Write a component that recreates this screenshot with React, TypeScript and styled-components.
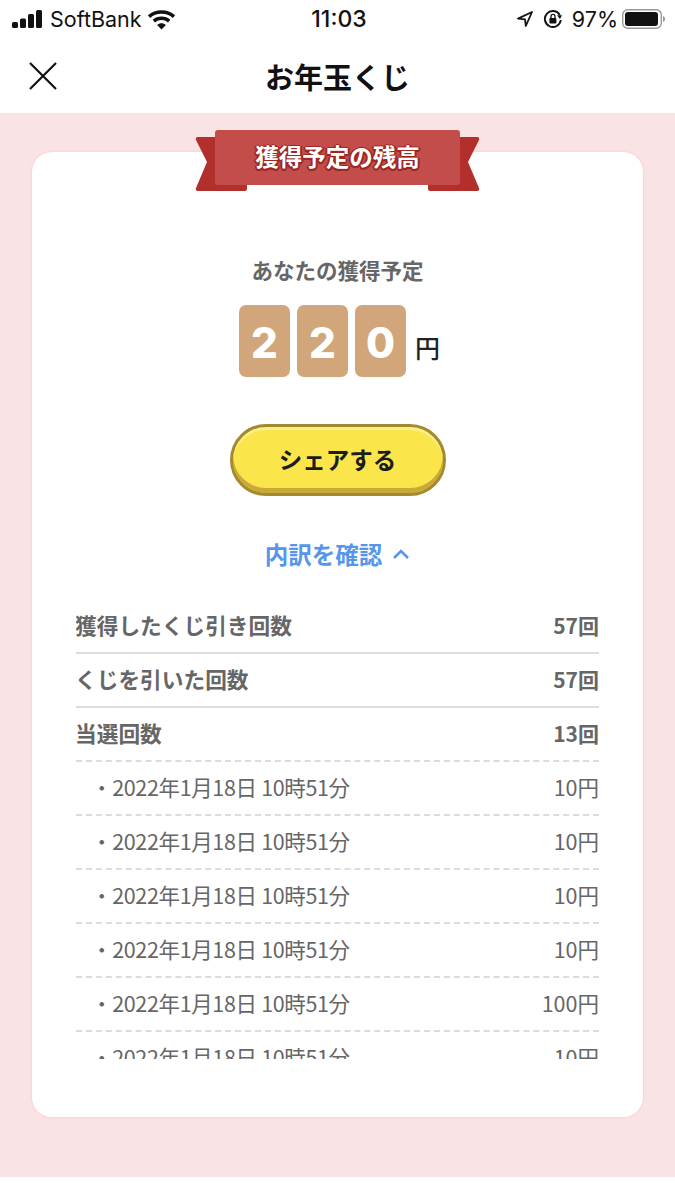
import React from 'react';
import styled, { createGlobalStyle } from 'styled-components';

const FONT = '"Noto Sans CJK JP", "Inter", "Liberation Sans", sans-serif';

const GlobalStyle = createGlobalStyle`
  html, body {
    margin: 0;
    padding: 0;
    background: #fff;
    font-family: ${FONT};
  }
`;

const Page = styled.div`
  width: 675px;
  height: 1200px;
  display: flex;
  flex-direction: column;
  overflow: hidden;
  background: #fff;
`;

const StatusBar = styled.div`
  height: 38px;
  padding: 0 9px 0 12px;
  display: grid;
  grid-template-columns: 1fr auto 1fr;
  align-items: center;
  color: #111;
  font-family: "Inter", "Liberation Sans", sans-serif;
  font-size: 21.5px;
`;

const StatusLeft = styled.div`
  display: flex;
  align-items: center;
  gap: 7px;
`;

const StatusRight = styled.div`
  display: flex;
  align-items: center;
  justify-content: flex-end;
  gap: 9px;
`;

const Clock = styled.div`
  font-weight: 500;
  font-size: 23px;
`;

const Percent = styled.span`
  margin-right: -5px;
`;

const Header = styled.header`
  height: 75px;
  padding: 0 0 0 28px;
  display: flex;
  align-items: center;
  position: relative;
`;

const Title = styled.h1`
  position: absolute;
  left: 0;
  right: 0;
  margin: 0;
  text-align: center;
  font-size: 29px;
  font-weight: 700;
  color: #111;
`;

const Stage = styled.main`
  height: 1064px;
  padding: 39px 32px 0;
  box-sizing: border-box;
  background: #fae3e4;
`;

const Card = styled.section`
  position: relative;
  width: 611px;
  height: 965px;
  box-sizing: border-box;
  background: #fff;
  box-shadow: 0 0 2px 1px #f7d5d6;
  border-radius: 20px;
  padding: 103px 44px 0;
  display: flex;
  flex-direction: column;
  align-items: stretch;
`;

const RibbonTails = styled.svg`
  position: absolute;
  left: 163px;
  top: -15px;
`;

const Ribbon = styled.div`
  position: absolute;
  left: 183px;
  top: -22px;
  width: 245px;
  height: 55px;
  box-sizing: border-box;
  padding-bottom: 3px;
  border-radius: 3px;
  background: #c24d4a;
  color: #fff;
  display: flex;
  align-items: center;
  justify-content: center;
  font-size: 23.5px;
  font-weight: 700;
  text-shadow:
    2px 0 0 #9e2623, -2px 0 0 #9e2623, 0 2px 0 #9e2623, 0 -1px 0 #9e2623,
    1px 2px 0 #9e2623, -1px 2px 0 #9e2623;
`;

const Caption = styled.div`
  text-align: center;
  font-size: 21.5px;
  line-height: 30px;
  font-weight: 700;
  color: #666;
`;

const Amount = styled.div`
  margin-top: 20px;
  display: flex;
  justify-content: center;
  gap: 7px;
  position: relative;
  left: 2px;
`;

const Digit = styled.div`
  width: 51px;
  height: 72px;
  box-sizing: border-box;
  padding-top: 2px;
  border-radius: 7px;
  background: #d2a67b;
  color: #fff;
  display: flex;
  align-items: center;
  justify-content: center;
  font-family: "Inter", "Liberation Sans", sans-serif;
  font-size: 42px;
  font-weight: 800;
`;

const Yen = styled.span`
  align-self: flex-end;
  margin: 0 0 12px 2px;
  font-size: 25px;
  line-height: 36px;
  font-weight: 500;
  color: #222;
`;

const ShareButton = styled.button`
  display: block;
  align-self: center;
  margin-top: 47px;
  width: 216px;
  height: 72px;
  box-sizing: border-box;
  border: 3px solid #a58a2d;
  border-radius: 36px;
  background: #fae64b;
  box-shadow: inset 0 -5px 0 #c9a93a, inset 0 3px 0 #fdf08c;
  font-family: ${FONT};
  font-size: 23.5px;
  font-weight: 700;
  color: #1c1c1c;
  padding: 0 0 3px;
`;

const Toggle = styled.div`
  margin-top: 41px;
  display: flex;
  justify-content: center;
  align-items: center;
  gap: 10px;
  color: #5596ec;
  font-size: 23.5px;
  line-height: 34px;
  font-weight: 700;
`;

const List = styled.div`
  margin-top: 29px;
  height: 459px;
  overflow: hidden;
`;

const Row = styled.div<{ $line: 'solid' | 'dashed' }>`
  height: 54px;
  box-sizing: border-box;
  display: flex;
  align-items: center;
  justify-content: space-between;
  padding-bottom: 3px;
  border-bottom: 2px ${p => p.$line} #dcdcdc;
  color: #666;
`;

const SummaryLabel = styled.span`
  font-size: 21.7px;
  font-weight: 700;
  margin-left: -1px;
`;

const SummaryValue = styled.span`
  font-size: 21px;
  font-weight: 700;
`;

const WinLabel = styled.span`
  padding-left: 15px;
  font-size: 21.5px;
  font-weight: 400;
  letter-spacing: -0.35px;
`;

const WinValue = styled.span`
  font-size: 21.5px;
  font-weight: 400;
`;

const summary = [
  { label: '獲得したくじ引き回数', value: '57回', line: 'solid' as const },
  { label: 'くじを引いた回数', value: '57回', line: 'solid' as const },
  { label: '当選回数', value: '13回', line: 'dashed' as const },
];

const wins = ['10円', '10円', '10円', '10円', '100円', '10円'];

const App = () => (
  <Page>
    <GlobalStyle />
    <StatusBar>
      <StatusLeft>
        <svg width="31" height="20" viewBox="0 0 31 20">
          <rect x="0" y="13" width="6" height="6" rx="1.5" fill="#111" />
          <rect x="8" y="9.5" width="6" height="9.5" rx="1.5" fill="#111" />
          <rect x="16" y="5" width="6" height="14" rx="1.5" fill="#111" />
          <rect x="24" y="1" width="6" height="18" rx="1.5" fill="#111" />
        </svg>
        <span>SoftBank</span>
        <svg width="27" height="21" viewBox="0 0 26 20" style={{ marginLeft: -1 }}>
          <path d="M1 7.2C7.6 1.2 18.4 1.2 25 7.2" fill="none" stroke="#111" strokeWidth="3.4" />
          <path d="M5.6 11.6C9.8 7.9 16.2 7.9 20.4 11.6" fill="none" stroke="#111" strokeWidth="3.4" />
          <path d="M8.8 15.2C11.2 13 14.8 13 17.2 15.2L13 19.6Z" fill="#111" />
        </svg>
      </StatusLeft>
      <Clock>11:03</Clock>
      <StatusRight>
        <svg width="18" height="18" viewBox="0 0 18 18">
          <path d="M16 2L2 8.6L9 9.4L9.8 16Z" fill="none" stroke="#111" strokeWidth="1.8" strokeLinejoin="round" />
        </svg>
        <svg width="20" height="20" viewBox="0 0 20 20">
          <path d="M16.8 6A8 8 0 1 0 17.8 11" fill="none" stroke="#111" strokeWidth="1.9" />
          <path d="M14 6.2L19 6.2L17 10Z" fill="#111" />
          <rect x="6.4" y="9" width="7" height="5.6" rx="1" fill="#111" />
          <path d="M8 9V7.4A2 2 0 0 1 12 7.4V9" fill="none" stroke="#111" strokeWidth="1.3" />
        </svg>
        <Percent>97%</Percent>
        <svg width="44" height="20" viewBox="0 0 44 20">
          <rect x="0.7" y="0.7" width="38.6" height="18.6" rx="5" fill="none" stroke="#999" strokeWidth="1.4" />
          <rect x="3" y="3" width="33" height="14" rx="3" fill="#111" />
          <path d="M41 7C42.5 7.5 43 8.5 43 10C43 11.5 42.5 12.5 41 13Z" fill="#999" />
        </svg>
      </StatusRight>
    </StatusBar>
    <Header>
      <svg width="30" height="30" viewBox="0 0 30 30">
        <path d="M2 2L28 28M28 2L2 28" stroke="#111" strokeWidth="2.2" fill="none" />
      </svg>
      <Title>お年玉くじ</Title>
    </Header>
    <Stage>
      <Card>
        <RibbonTails width="285" height="56" viewBox="0 0 285 56">
          <path d="M3 0H22V44H52V52Q52 54 50 54H3Q0 54 1 51L12 25L1 3Q0 0 3 0Z" fill="#b32f2c" />
          <path d="M282 0H263V44H233V52Q233 54 235 54H282Q285 54 284 51L273 25L284 3Q285 0 282 0Z" fill="#b32f2c" />
        </RibbonTails>
        <Ribbon>獲得予定の残高</Ribbon>
        <Caption>あなたの獲得予定</Caption>
        <Amount>
          <Digit>2</Digit>
          <Digit>2</Digit>
          <Digit>0</Digit>
          <Yen>円</Yen>
        </Amount>
        <ShareButton>シェアする</ShareButton>
        <Toggle>
          内訳を確認
          <svg width="18" height="12" viewBox="0 0 18 12">
            <path d="M2 10L9 3L16 10" fill="none" stroke="#5596ec" strokeWidth="2.6" />
          </svg>
        </Toggle>
        <List>
          {summary.map(item => (
            <Row key={item.label} $line={item.line}>
              <SummaryLabel>{item.label}</SummaryLabel>
              <SummaryValue>{item.value}</SummaryValue>
            </Row>
          ))}
          {wins.map((value, i) => (
            <Row key={i} $line="dashed">
              <WinLabel>・2022年1月18日 10時51分</WinLabel>
              <WinValue>{value}</WinValue>
            </Row>
          ))}
        </List>
      </Card>
    </Stage>
  </Page>
);

export default App;
